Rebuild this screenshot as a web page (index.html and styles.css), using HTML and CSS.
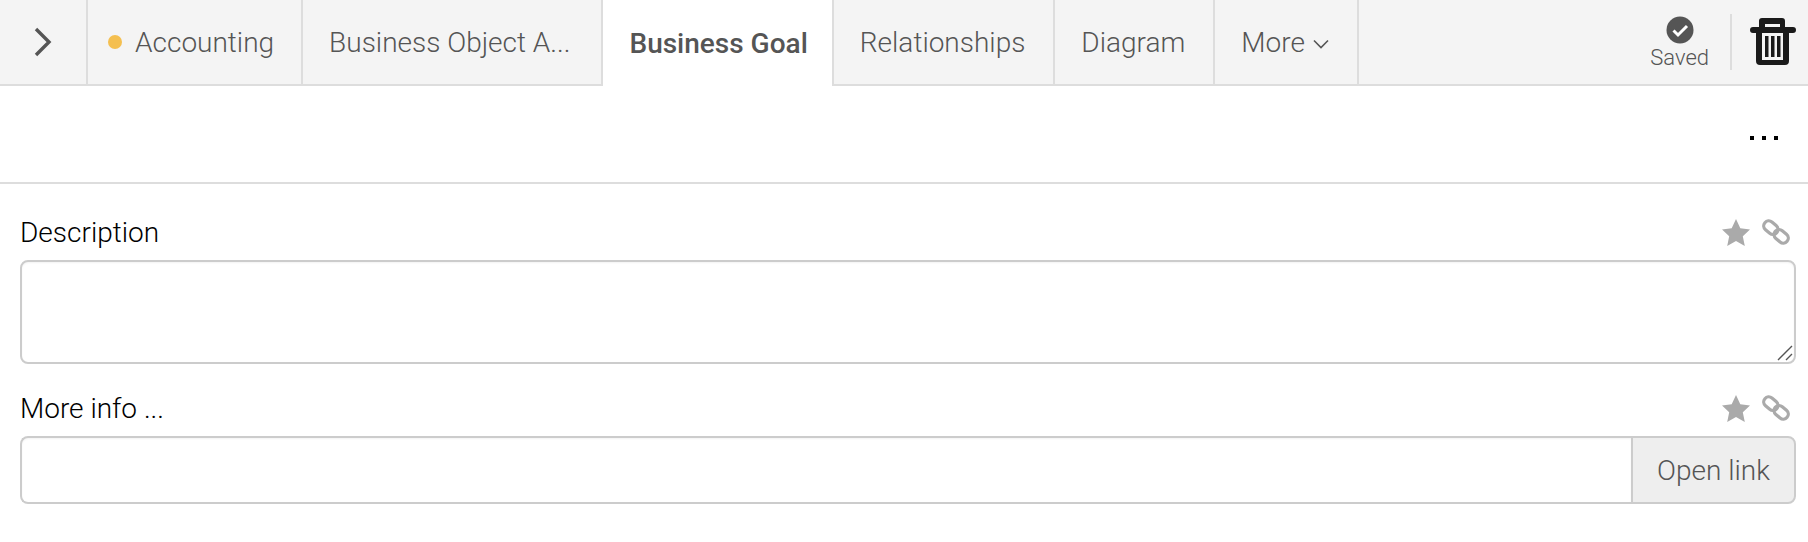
FILE: index.html
```html
<!DOCTYPE html>
<html lang="en">
<head>
<meta charset="utf-8">
<title>Business Goal</title>
<link rel="stylesheet" href="styles.css">
</head>
<body>
<div class="tabbar">
  <div class="tab toggle">
    <svg class="toggle-icon" width="20" height="30" viewBox="0 0 20 30"><path d="M3 2l13 13L3 28" fill="none" stroke="#555" stroke-width="3.400"/></svg>
  </div>
  <div class="tab status"><span class="dot"></span>Accounting</div>
  <div class="tab truncated">Business Object A...</div>
  <div class="tab active">Business Goal</div>
  <div class="tab">Relationships</div>
  <div class="tab">Diagram</div>
  <div class="tab">More
    <svg class="caret" width="16" height="10" viewBox="0 0 16 10"><path d="M1 1.500l7 7 7-7" fill="none" stroke="#555" stroke-width="1.600"/></svg>
  </div>
  <div class="actions">
    <div class="saved">
      <svg width="28" height="28" viewBox="0 0 28 28"><circle cx="14" cy="14" r="13.500" fill="#555"/><path d="M7.500 14.500l4.500 4.500 9-9" fill="none" stroke="#fff" stroke-width="3"/></svg>
      <span>Saved</span>
    </div>
    <div class="divider"></div>
    <svg class="trash" width="46" height="48" viewBox="0 0 46 48">
      <path fill="#1a1a1a" fill-rule="evenodd" d="M12 0h20a3 3 0 0 1 3 3v6h8a3 3 0 0 1 0 6h-4v28a4 4 0 0 1-4 4H10a4 4 0 0 1-4-4V15H3a3 3 0 0 1 0-6h6V3a3 3 0 0 1 3-3zm3 6v3h15V6zM12 15v27h21V15z"/>
      <path fill="#1a1a1a" d="M15 18h3.500v21H15zM21 18h3.500v21H21zM27 18h3.500v21H27z"/>
    </svg>
  </div>
</div>
<div class="toolbar"><span class="ellipsis"><i></i><i></i><i></i></span></div>
<form class="form">
  <div class="field">
    <div class="field-head">
      <label class="label">Description</label>
      <div class="field-icons">
        <svg width="28" height="27" viewBox="0 0 28 27"><path fill="#aaa" d="M14 0l4.300 9.300 9.700 1.100-7.200 6.800 2 9.800L14 22.100 5.200 27l2-9.800L0 10.400l9.700-1.100z"/></svg>
        <svg width="28" height="28" viewBox="0 0 28 28"><g transform="rotate(40 14 14)" fill="none" stroke="#aaa" stroke-width="3.200"><rect x="-0.500" y="9" width="15.500" height="10" rx="5"/><rect x="13" y="9" width="15.500" height="10" rx="5"/></g></svg>
      </div>
    </div>
    <div class="textarea-wrap">
      <textarea class="textarea"></textarea>
      <svg class="grip" width="16" height="16" viewBox="0 0 16 16"><path d="M1 15L15 1M9 15l6-6" fill="none" stroke="#555" stroke-width="1.400"/></svg>
    </div>
  </div>
  <div class="field">
    <div class="field-head">
      <label class="label">More info ...</label>
      <div class="field-icons">
        <svg width="28" height="27" viewBox="0 0 28 27"><path fill="#aaa" d="M14 0l4.300 9.300 9.700 1.100-7.200 6.800 2 9.800L14 22.100 5.200 27l2-9.800L0 10.400l9.700-1.100z"/></svg>
        <svg width="28" height="28" viewBox="0 0 28 28"><g transform="rotate(40 14 14)" fill="none" stroke="#aaa" stroke-width="3.200"><rect x="-0.500" y="9" width="15.500" height="10" rx="5"/><rect x="13" y="9" width="15.500" height="10" rx="5"/></g></svg>
      </div>
    </div>
    <div class="input-group">
      <input class="input" type="text">
      <span class="addon">Open link</span>
    </div>
  </div>
</form>
</body>
</html>
```
FILE: styles.css
```css
* { box-sizing: border-box; }
html, body { margin: 0; padding: 0; background: #fff; }
body { font-family: Roboto, "Liberation Sans", sans-serif; font-weight: 300; overflow: hidden; }

.tabbar {
  display: flex;
  height: 86px;
  background: #f4f4f4;
  border-bottom: 2px solid #ddd;
}
.tab {
  display: flex;
  align-items: center;
  padding: 0 28px 0 26px;
  font-size: 28px;
  color: #555;
  border-right: 2px solid #ddd;
  white-space: nowrap;
}
.toggle { width: 88px; padding: 0 0 0 33px; }
.status { padding-right: 27px; }
.truncated { padding-right: 31px; }
.active {
  height: 86px;
  background: #fff;
  font-weight: 500;
  padding: 0 24px 0 26px;
}
.dot {
  width: 14px;
  height: 14px;
  border-radius: 50%;
  background: #f4bf50;
  margin-right: 13px;
  margin-left: -6px;
}
.caret { margin-left: 8px; margin-top: 3px; }
.actions { margin-left: auto; display: flex; align-items: center; padding-right: 12px; }
.saved { display: flex; flex-direction: column; align-items: center; color: #555; font-size: 22px; margin-top: 2px; }
.saved span { line-height: 24px; margin-top: 2px; }
.divider { width: 2px; height: 56px; background: #ddd; margin: 0 18px 0 21px; }

.toolbar {
  height: 98px;
  display: flex;
  justify-content: flex-end;
  border-bottom: 2px solid #ddd;
  padding: 50px 30px 0 0;
}
.ellipsis { display: flex; gap: 8px; height: 5px; }
.ellipsis i { width: 4px; height: 4px; background: #000; display: block; }

.form { padding: 4px 12px 0 20px; }
.field-head { display: flex; justify-content: space-between; align-items: center; height: 72px; padding: 28px 0 12px; }
.label { font-size: 28px; color: #000; }
.field-icons { display: flex; gap: 12px; align-items: center; margin-right: 6px; }
.textarea-wrap { position: relative; }
.textarea {
  display: block;
  width: 100%;
  height: 104px;
  border: 2px solid #ccc;
  border-radius: 8px;
  background: #fff;
  resize: none;
  margin: 0;
  box-shadow: inset 0 1px 2px rgba(0,0,0,.05);
}
.grip { position: absolute; right: 3px; bottom: 3px; }
.input-group { display: flex; height: 68px; }
.input {
  flex: 1;
  min-width: 0;
  border: 2px solid #ccc;
  border-right: 0;
  border-radius: 8px 0 0 8px;
  background: #fff;
  box-shadow: inset 0 1px 2px rgba(0,0,0,.05);
}
.addon {
  width: 165px;
  display: flex;
  align-items: center;
  justify-content: center;
  border: 2px solid #ccc;
  border-radius: 0 8px 8px 0;
  background: #eee;
  color: #555;
  font-size: 28px;
}
```
